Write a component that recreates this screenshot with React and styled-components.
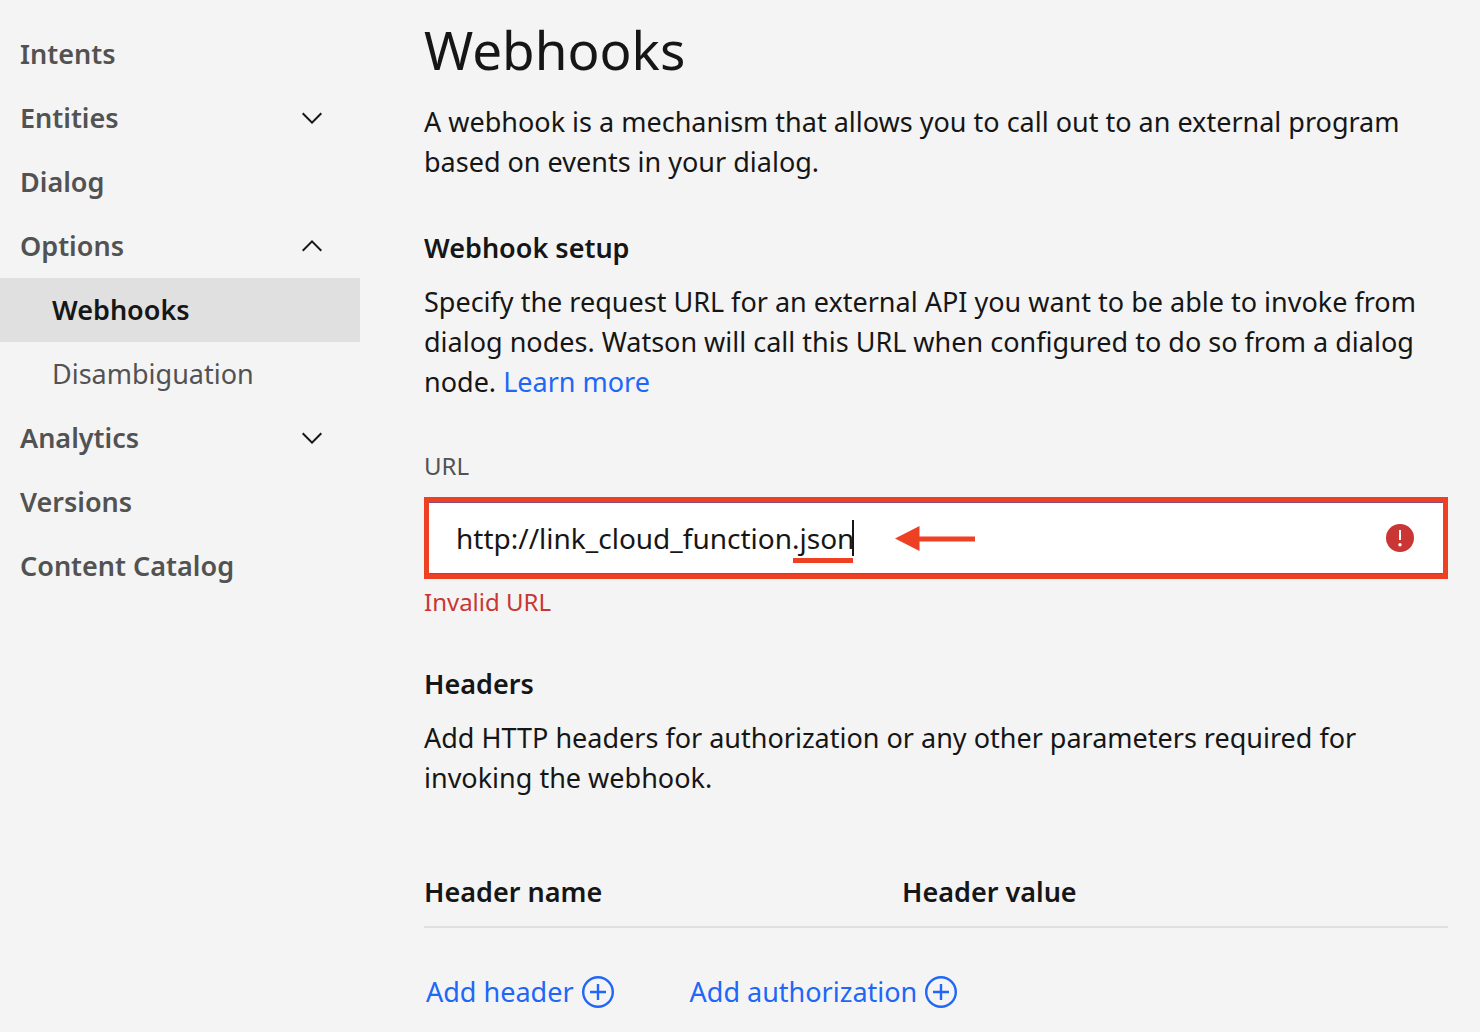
import React, { useState } from "react";
import styled, { createGlobalStyle, css } from "styled-components";

const color = {
  page: "#f4f4f4",
  selected: "#e0e0e0",
  text: "#161616",
  muted: "#525252",
  link: "#2067f7",
  error: "#c93633",
  mark: "#ee4023",
  focus: "#8a4a80",
  field: "#ffffff",
};

const GlobalStyle = createGlobalStyle`
  *, *::before, *::after { box-sizing: border-box; }
  body {
    margin: 0;
    background: ${color.page};
    color: ${color.text};
    font-family: "Noto Sans", "Open Sans", sans-serif;
    font-size: 27px;
    line-height: 40px;
  }
  button, input { font: inherit; color: inherit; }
`;

const Page = styled.div`
  display: grid;
  grid-template-columns: 360px minmax(0, 1fr);
  column-gap: 64px;
  padding-right: 32px;
`;

const SideNav = styled.nav`
  padding-top: 22px;
`;

const NavList = styled.ul`
  list-style: none;
  margin: 0;
  padding: 0;
`;

const navItem = css`
  display: flex;
  align-items: center;
  justify-content: space-between;
  width: 100%;
  height: 64px;
  padding: 0 32px 0 20px;
  border: 0;
  background: none;
  color: ${color.muted};
  font-weight: 600;
  text-align: left;
  text-decoration: none;
  cursor: pointer;
`;

const NavLink = styled.a`
  ${navItem}
`;

const NavToggle = styled.button`
  ${navItem}
`;

const SubLink = styled.a`
  ${navItem}
  padding-left: 52px;
  font-weight: ${(p) => (p.$selected ? 600 : 400)};
  color: ${(p) => (p.$selected ? color.text : color.muted)};
  background: ${(p) => (p.$selected ? color.selected : "none")};
`;

const Chevron = styled.svg`
  width: 32px;
  height: 32px;
  fill: ${color.text};
  transform: ${(p) => (p.$open ? "rotate(180deg)" : "none")};
`;

const Main = styled.main`
  padding: 14px 0 16px;
`;

const Title = styled.h1`
  margin: 0 0 16px;
  font-size: 53px;
  line-height: 72px;
  font-weight: 400;
`;

const Section = styled.section`
  margin-top: 46px;
`;

const SectionTitle = styled.h2`
  margin: 0 0 14px;
  font-size: 27px;
  line-height: 40px;
  font-weight: 600;
`;

const Text = styled.p`
  margin: 0;
`;

const Link = styled.a`
  color: ${color.link};
  text-decoration: none;
`;

const Field = styled.div`
  margin-top: 48px;
`;

const FieldLabel = styled.label`
  display: block;
  margin-bottom: 15px;
  font-size: 24px;
  line-height: 32px;
  color: ${color.muted};
`;

const InputFrame = styled.div`
  position: relative;
`;

const TextInput = styled.input`
  display: block;
  width: 100%;
  height: 82px;
  padding: 0 80px 0 27px;
  border: 5px solid ${color.mark};
  border-radius: 0;
  outline: none;
  background: ${color.field};
  box-shadow: inset 0 1px ${color.focus}, inset 0 -1px ${color.focus};
  font-size: 28px;
  caret-color: transparent;
`;

const ErrorIcon = styled.svg`
  position: absolute;
  top: 25px;
  right: 32px;
  width: 32px;
  height: 32px;
`;

const Caret = styled.span`
  position: absolute;
  top: 23px;
  left: 428px;
  width: 2px;
  height: 36px;
  background: ${color.text};
`;

const Underline = styled.span`
  position: absolute;
  top: 61px;
  left: 369px;
  width: 60px;
  height: 5px;
  background: ${color.mark};
`;

const Arrow = styled.svg`
  position: absolute;
  top: 28px;
  left: 471px;
  width: 80px;
  height: 28px;
  fill: ${color.mark};
`;

const FieldError = styled.p`
  margin: 7px 0 0;
  font-size: 24px;
  line-height: 32px;
  color: ${color.error};
`;

const HeaderTable = styled.table`
  width: 100%;
  margin-top: 64px;
  table-layout: fixed;
  border-collapse: separate;
  border-spacing: 0;
`;

const ColumnHead = styled.th`
  width: ${(p) => p.$width};
  height: 66px;
  padding: 10px 0 14px;
  border-bottom: 2px solid ${color.selected};
  font-weight: 600;
  text-align: left;
`;

const Actions = styled.div`
  display: flex;
  gap: 76px;
  margin-top: 44px;
  padding-left: 2px;
`;

const ActionButton = styled.button`
  display: flex;
  align-items: center;
  gap: 8px;
  padding: 0;
  border: 0;
  background: none;
  color: ${color.link};
  cursor: pointer;
`;

const PlusIcon = styled.svg`
  width: 32px;
  height: 32px;
  fill: none;
  stroke: currentColor;
  stroke-width: 2.4;
`;

function NavGroup({ label, initiallyOpen = false, children }) {
  const [open, setOpen] = useState(initiallyOpen);
  return (
    <li>
      <NavToggle type="button" aria-expanded={open} onClick={() => setOpen(!open)}>
        {label}
        <Chevron viewBox="0 0 16 16" $open={open} aria-hidden="true">
          <path d="M8 11L3 6l.7-.7L8 9.6l4.3-4.3.7.7z" />
        </Chevron>
      </NavToggle>
      {open && children}
    </li>
  );
}

function Action({ children }) {
  return (
    <ActionButton type="button">
      {children}
      <PlusIcon viewBox="0 0 32 32" aria-hidden="true">
        <circle cx="16" cy="16" r="14.8" />
        <path d="M16 8v16M8 16h16" />
      </PlusIcon>
    </ActionButton>
  );
}

export default function App() {
  const [url, setUrl] = useState("http://link_cloud_function.json");
  return (
    <>
      <GlobalStyle />
      <Page>
        <SideNav aria-label="Skill">
          <NavList>
            <li><NavLink href="#intents">Intents</NavLink></li>
            <NavGroup label="Entities" />
            <li><NavLink href="#dialog">Dialog</NavLink></li>
            <NavGroup label="Options" initiallyOpen>
              <NavList>
                <li><SubLink href="#webhooks" $selected aria-current="page">Webhooks</SubLink></li>
                <li><SubLink href="#disambiguation">Disambiguation</SubLink></li>
              </NavList>
            </NavGroup>
            <NavGroup label="Analytics" />
            <li><NavLink href="#versions">Versions</NavLink></li>
            <li><NavLink href="#catalog">Content Catalog</NavLink></li>
          </NavList>
        </SideNav>
        <Main>
          <Title>Webhooks</Title>
          <Text>
            A webhook is a mechanism that allows you to call out to an external program based on
            events in your dialog.
          </Text>

          <Section>
            <SectionTitle>Webhook setup</SectionTitle>
            <Text>
              Specify the request URL for an external API you want to be able to invoke from dialog
              nodes. Watson will call this URL when configured to do so from a dialog node.{" "}
              <Link href="#learn-more">Learn more</Link>
            </Text>
            <Field>
              <FieldLabel htmlFor="url">URL</FieldLabel>
              <InputFrame>
                <TextInput
                  id="url"
                  type="text"
                  spellCheck={false}
                  aria-invalid="true"
                  aria-describedby="url-error"
                  value={url}
                  onChange={(e) => setUrl(e.target.value)}
                />
                <Caret />
                <Underline />
                <Arrow viewBox="0 0 80 28" aria-hidden="true">
                  <path d="M0 13.500L24.500 1v10.500H80v5H24.500V26z" />
                </Arrow>
                <ErrorIcon viewBox="0 0 32 32" aria-hidden="true">
                  <circle cx="16" cy="16" r="14" fill={color.error} />
                  <path d="M15 8h2v10h-2z" fill="#fff" />
                  <circle cx="16" cy="22.800" r="1.700" fill="#fff" />
                </ErrorIcon>
              </InputFrame>
              <FieldError id="url-error">Invalid URL</FieldError>
            </Field>
          </Section>

          <Section>
            <SectionTitle>Headers</SectionTitle>
            <Text>
              Add HTTP headers for authorization or any other parameters required for invoking the
              webhook.
            </Text>
            <HeaderTable>
              <thead>
                <tr>
                  <ColumnHead scope="col" $width="478px">Header name</ColumnHead>
                  <ColumnHead scope="col">Header value</ColumnHead>
                </tr>
              </thead>
            </HeaderTable>
            <Actions>
              <Action>Add header</Action>
              <Action>Add authorization</Action>
            </Actions>
          </Section>
        </Main>
      </Page>
    </>
  );
}
